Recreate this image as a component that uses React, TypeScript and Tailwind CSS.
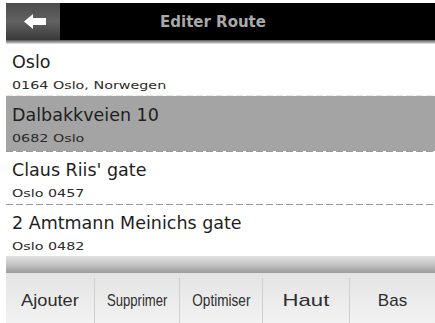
import React from "react";

const rows = [
  { t: "Oslo", s: "0164 Oslo, Norwegen", h: "h-[51px]", sel: false },
  { t: "Dalbakkveien 10", s: "0682 Oslo", h: "h-[55px]", sel: true },
  { t: "Claus Riis' gate", s: "Oslo 0457", h: "h-[52px]", sel: false },
  { t: "2 Amtmann Meinichs gate", s: "Oslo 0482", h: "h-[51px]", sel: false },
];

function Dash({ light }: { light?: boolean }) {
  return (
    <div
      className={
        light
          ? "h-px w-full bg-[repeating-linear-gradient(90deg,#e8e8e8_0_7px,transparent_7px_10px)]"
          : "h-px w-full bg-[repeating-linear-gradient(90deg,#9a9a9a_0_7px,transparent_7px_10px)]"
      }
    />
  );
}

export default function App() {
  return (
    <div className="w-[435px] h-[323px] bg-white pl-[6px] pt-[3px] overflow-hidden font-['DejaVu_Sans',sans-serif]">
      <div className="flex flex-col w-[429px] h-[320px]">
        {/* top bar */}
        <div className="flex h-[37px] bg-black items-center">
          <div className="w-[54px] h-full bg-gradient-to-b from-[#4c4c4c] via-[#626262] to-[#3a3a3a] flex items-center justify-center">
            <svg width="23" height="15" viewBox="0 0 23 15" className="ml-[4px]">
              <path d="M0 7.5 L9 0 L9 4 L22 4 L22 11 L9 11 L9 15 Z" fill="#ffffff" />
            </svg>
          </div>
          <div className="ml-[100px] text-[15px] font-bold text-[#a9a9a9] leading-none pt-[2px]">
            Editer Route
          </div>
        </div>
        <div className="h-[4px] bg-gradient-to-b from-[#5a5a5a] via-[#9a9a9a] to-[#f0f0f0]" />

        {/* list */}
        <div className="flex flex-col">
          {rows.map((r, i) => (
            <div key={i} className="flex flex-col">
              {i > 0 && <Dash light={i === 1} />}
              <div
                className={`${r.h} ${r.sel ? "bg-[#a4a4a4]" : "bg-white"} pl-[6px] ${
                  r.sel ? "pt-[9px]" : "pt-[8px]"
                } flex flex-col`}
              >
                <div className="text-[17.5px] leading-[20px] text-[#1e1e1e]">{r.t}</div>
                <div className="mt-[7px] text-[11px] leading-[14px] text-[#2a2a2a]">
                  <span className="inline-block origin-left scale-x-[1.3]">{r.s}</span>
                </div>
              </div>
            </div>
          ))}
        </div>

        {/* bottom band */}
        <div className="h-[17px] bg-gradient-to-b from-[#e2e2e2] via-[#c4c4c4] to-[#9c9c9c]" />
        {/* buttons */}
        <div className="flex flex-1 pt-[5px] bg-gradient-to-b from-[#e4e4e4] to-[#f2f2f2] font-['Liberation_Sans',sans-serif] text-[17px] text-[#2e2e2e]">
          <div className="w-[89px] flex items-center justify-center border-r border-[#cfcfcf]">
            <span className="inline-block scale-x-[1.07]">Ajouter</span>
          </div>
          <div className="w-[85px] flex items-center justify-center border-r border-[#cfcfcf]">
            <span className="inline-block scale-x-[0.77]">Supprimer</span>
          </div>
          <div className="w-[83px] flex items-center justify-center border-r border-[#cfcfcf]">
            <span className="inline-block scale-x-[0.8]">Optimiser</span>
          </div>
          <div className="w-[87px] flex items-center justify-center border-r border-[#cfcfcf]">
            <span className="inline-block scale-x-[1.3]">Haut</span>
          </div>
          <div className="flex-1 flex items-center justify-center">
            <span className="inline-block">Bas</span>
          </div>
        </div>
      </div>
    </div>
  );
}
